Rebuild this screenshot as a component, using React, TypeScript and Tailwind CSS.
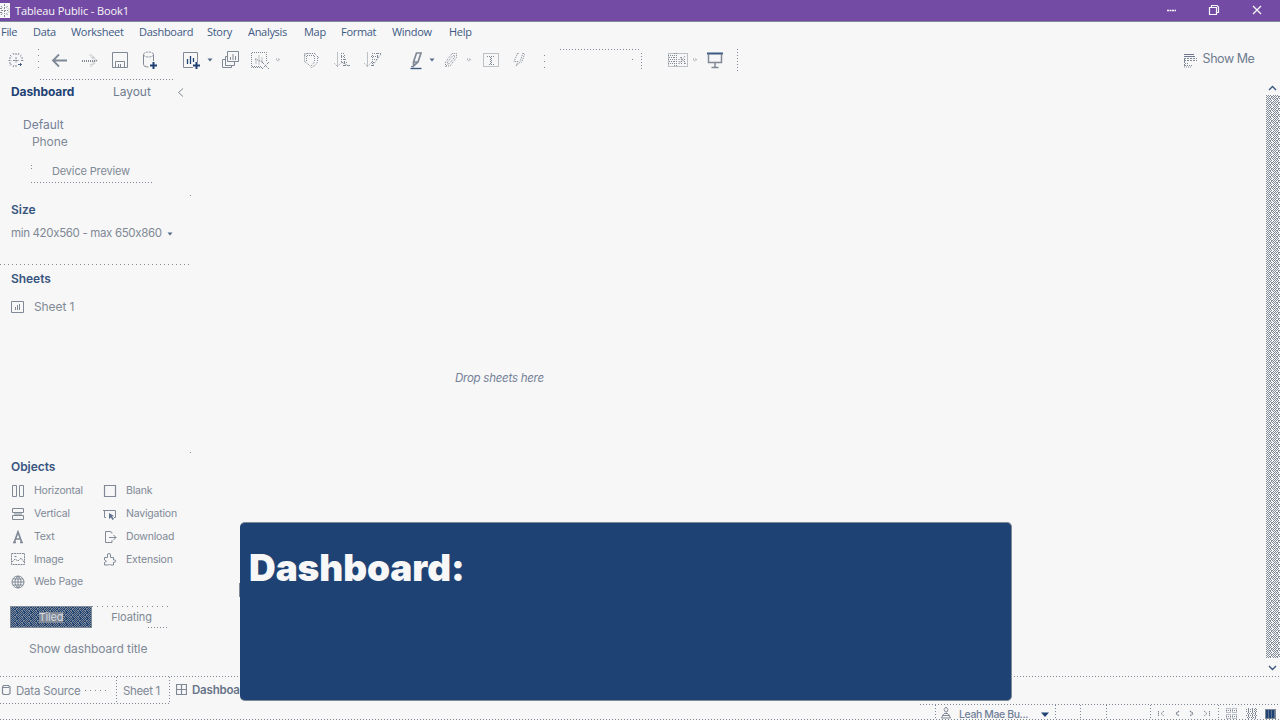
import type { ReactNode } from "react";

const dotsX = "bg-[repeating-linear-gradient(90deg,#808996_0_1px,transparent_1px_3px)]";
const dotsWide = "bg-[repeating-linear-gradient(90deg,#808996_0_1px,transparent_1px_5px)]";
const dotsY = "bg-[repeating-linear-gradient(180deg,#808996_0_1px,transparent_1px_3px)]";
const dotsYWide = "bg-[repeating-linear-gradient(180deg,#808996_0_1px,transparent_1px_6px)]";

function Dither({ id, w, h, color, className = "" }: { id: string; w: number; h: number; color: string; className?: string }) {
  return (
    <svg width={w} height={h} viewBox={`0 0 ${w} ${h}`} shapeRendering="crispEdges" className={`block shrink-0 ${className}`}>
      <defs>
        <pattern id={id} width="7" height="6" patternUnits="userSpaceOnUse">
          <path
            d="M0 0h1v1H0zM2 0h1v1H2zM4 0h1v1H4zM1 1h1v1H1zM3 1h1v1H3zM5 1h2v1H5zM0 2h1v1H0zM2 2h1v1H2zM5 2h1v1H5zM1 3h1v1H1zM3 3h2v1H3zM6 3h1v1H6zM0 4h1v1H0zM2 4h1v1H2zM4 4h1v1H4zM1 5h1v1H1zM3 5h1v1H3zM5 5h1v1H5z"
            fill={color}
          />
        </pattern>
      </defs>
      <path d={`M0 0h${w}v${h}H0z`} fill={`url(#${id})`} />
    </svg>
  );
}

function Icon({ children, className = "", dash = false, w = 20, h = 20 }: { children: ReactNode; className?: string; dash?: boolean; w?: number; h?: number }) {
  return (
    <svg
      width={w}
      height={h}
      viewBox={`0 0 ${w} ${h}`}
      fill="none"
      stroke="#808996"
      strokeWidth="1"
      strokeDasharray={dash ? "1 1" : undefined}
      className={`shrink-0 ${className}`}
    >
      {children}
    </svg>
  );
}

function Caret({ className = "", dark = false }: { className?: string; dark?: boolean }) {
  return (
    <svg width="6" height="4" viewBox="0 0 6 4" className={`shrink-0 ${className}`}>
      {dark ? <path d="M.5 .5h5L3 3.5z" fill="#52698a" /> : <path d="M1 1h4L3 3.5z" fill="none" stroke="#808996" strokeWidth=".8" strokeDasharray="1 1" />}
    </svg>
  );
}

const menu = [
  ["File", "w-8"],
  ["Data", "w-[38px]"],
  ["Worksheet", "w-[68px]"],
  ["Dashboard", "w-[68px]"],
  ["Story", "w-[41px]"],
  ["Analysis", "w-14"],
  ["Map", "w-[37px]"],
  ["Format", "w-[51px]"],
  ["Window", "w-[57px]"],
  ["Help", "w-10"],
];

function TitleBar() {
  return (
    <header className="flex h-[22px] shrink-0 items-center border-b border-[#808996] bg-[#734ba4] text-[#f7f7f7]">
      <svg width="10" height="15" viewBox="0 0 10 15" className="shrink-0">
        <path d="M0 0h10v15H0z" fill="#f7f7f7" />
        <path d="M4.500 4v7M1 7.500h7M1 3l1.500 2M7.500 3 6 5M1 12l1.500-2M7.500 12 6 10M4.500 1v2M4.500 12v2M8 5.500l1 1M8 9.500l1-1M0 5.500h2M0 9.500h2" stroke="#808996" strokeDasharray="2 1" fill="none" />
      </svg>
      <span className="ml-[5px] w-[200px] text-[11px] leading-5 font-medium tracking-[-0.1px]">Tableau Public - Book1</span>
      <div className="ml-auto flex items-center pb-0.5">
        <svg width="10" height="10" viewBox="0 0 10 10" stroke="#f7f7f7" fill="none" className="mr-[-2px] ml-0.5"><path d="M0 5.500h9" strokeWidth="1.300" strokeDasharray="2 .5" /></svg>
        <svg width="12" height="12" viewBox="0 0 12 12" stroke="#f7f7f7" fill="none" className="ml-[33px]"><path d="M1.500 3.500h7v7h-7zM3.500 3V1.500h5.500l1.500 1.500v5.500H9" strokeWidth="1.200" /></svg>
        <svg width="10" height="10" viewBox="0 0 10 10" stroke="#f7f7f7" fill="none" className="mr-[18px] ml-[32px]"><path d="m1 1 8 8M9 1 1 9" strokeWidth="1.300" /></svg>
      </div>
    </header>
  );
}

function Toolbar() {
  return (
    <div className="flex h-9 shrink-0 items-center">
      <Icon className="ml-1.5">
        <path d="M10 3v2M10 7v6M10 15v2M2.500 10.500h3M7 10.500h6M15 10.500h3M4 5l2 2M15.500 5l-2 2M4 15.500l2-2M7 3l1 2M13 3l-1 2M3 8h2M15 8h2M7 17l1-2M3 13h2" strokeDasharray="2 .7" />
        <path d="M12 14.500h4M14.500 13v3" stroke="#4a6388" />
      </Icon>
      <span className={`ml-3 h-[23px] w-px ${dotsYWide}`} />
      <Icon className="ml-[11px]"><path d="M17 10.500H3M9 4.500l-6 6 6 6" strokeWidth="1.800" /></Icon>
      <Icon className="ml-2.5" dash><path d="M2 10.500h15M2 11.500h14M11 4.500l6 6-6 6M10 5.500l5 5-5 5" /></Icon>
      <Icon className="ml-2.5"><path d="M2.500 2.500h15v15h-15zM5.500 17v-5.500h9V17M8.500 14v3M10.500 14v3" /></Icon>
      <Icon className="ml-2.5">
        <ellipse cx="8.500" cy="4.500" rx="5" ry="2.500" strokeDasharray="2 1" />
        <path d="M3.500 4.500v10c0 1.500 2 2.500 5 2.500M13.500 4.500V11" />
        <path d="M13.500 12v7M10 15.500h7" stroke="#1e4274" strokeWidth="2" />
      </Icon>
      <Icon className="ml-[21px]">
        <path d="M12 17.500H2.500v-15h14V12" />
        <path d="M6.500 9v5M9.500 6v8M12.500 8v4" stroke="#1e4274" strokeWidth="1.300" />
        <path d="M15.500 12v7M12 15.500h7" stroke="#1e4274" strokeWidth="2" />
      </Icon>
      <Caret className="ml-1.5" dark />
      <Icon className="ml-[7px]">
        <path d="M7.500 1.500h11v10h-11zM7 6.500H5.500v9h9V12M5 9.500H2.500v8h9V16" />
        <path d="M10.500 7v3M13 4v6M15.500 6v4" />
      </Icon>
      <Icon className="ml-[11px]" dash>
        <path d="M11 17.500H.5v-15h15V11M1 16.500h9M5 8.500v6M8 5.500v9M11 7.500v5M4 9l8 3" />
        <path d="m11 12 7 7M18 12l-7 7" strokeDasharray="3 1" />
      </Icon>
      <Caret className="ml-1" />
      <Icon className="ml-5" dash>
        <path d="M3.500 11.500v-8h5M9 3.500h6M16.500 6v6L14 15.500l-3.500 2L7 14l-3.500-2.500M5.500 11V5.500h8V12L10 16M3 6l4-3M13 3l5 5" />
      </Icon>
      <Icon className="ml-[11px]" dash>
        <path d="M5.500 2.500v14M2.500 13.500l3 3 3-3M9 3.500h3M9 6.500h4M9 9.500h6M10 12.500h6M11 15.500h7M9.500 3v9M12.500 5v11M9 12l8 4" />
      </Icon>
      <Icon className="ml-[11px]" dash>
        <path d="M4.500 2.500v14M1.500 13.500l3 3 3-3M9 3.500h9M8 6.500h8M9 9.500h5M8 12.500h4M8 15.500h3M9.500 3v13M14.500 3v6M18 4l-8 11" />
      </Icon>
      <Icon className="ml-[23px]">
        <path d="M7.500 12 10.500 3h4.500l-3 9-4.500 4zM7.500 12h4" strokeWidth="1.700" />
        <path d="M5 16.500h3" />
        <path d="M4.500 18.500h11" stroke="#3e5a82" strokeWidth="1.400" />
      </Icon>
      <Caret className="ml-[3px]" dark />
      <Icon className="ml-1.5" dash>
        <path d="m4 13 7-9.500h4.500v4L9 16H5zM6 13l6-7.500h1.500v2L8 14zM4 17l3-3" />
      </Icon>
      <Caret className="ml-[5px]" />
      <Icon className="ml-[9px]" dash><path d="M2.500 3.500h15v13h-15zM6 6.500h8M10.500 6v8M8 14.500h5M9.500 7v7" /></Icon>
      <Icon className="ml-2" dash><path d="M8.500 3.500 5 11.500h4l-2 5M8.500 3.500h2M14 3l-3.500 10-4 3M14 3l1.500 1.500-3 8" /></Icon>
      <div className="-mt-0.5 ml-[15px] flex h-5 w-[98px] flex-col">
        <span className={`ml-[16px] h-px w-[79px] shrink-0 ${dotsX}`} />
        <div className="flex h-[19px] items-center justify-between">
          <span className={`mt-2 h-[17px] w-px ${dotsYWide}`} />
          <span className="mr-2 ml-auto h-px w-px bg-[#808996]" />
          <span className={`mt-1 h-[17px] w-px ${dotsY}`} />
        </div>
      </div>
      <Icon className="ml-[25px]" w={22} dash>
        <path d="M1.500 3.500h19v13h-19zM1 5.500h6M2 7.500h6M1 9.500h6M2 11.500h6M1 13.500h6M9.500 3v13M7.500 3v13M12 14V9M14.500 14V6M17.500 14V8M13 7l6 7M18 6l-6 8" />
      </Icon>
      <Caret className="ml-[3px]" />
      <Icon className="ml-[7px]">
        <path d="M2 3.500h16" stroke="#3e5a82" strokeWidth="2" />
        <path d="M3.500 4v8.500h13V4M10 12.500v5M6.500 17.500h7" strokeWidth="1.500" />
      </Icon>
      <span className={`ml-3 h-[22px] w-px ${dotsY}`} />
      <button className="ml-auto flex items-center font-[Inter,sans-serif] text-[12.5px] leading-5 text-[#6f7c90]">
        <Icon w={13} h={15}>
          <path d="M0 1.500h10M0 3.500h11" stroke="#6b7890" />
          <path d="M0 5.500h13M0 7.500h13M.5 5v9" strokeDasharray="2 1" />
          <path d="M1 10.500h4M1 12.500h7M0 14h7" strokeDasharray="1 1" />
        </Icon>
        <span className="-mt-0.5 mr-[25px] ml-[5px] w-[53px] whitespace-nowrap tracking-[-0.45px]">Show Me</span>
      </button>
    </div>
  );
}

const objectsLeft = [
  { label: "Horizontal", icon: <path d="M1.500 1.500h4v11h-4zM8.500 1.500h4v11h-4z" /> },
  { label: "Vertical", icon: <path d="M1.500 1.500h11v4h-11zM1.500 8.500h11v4h-11zM3 7h8" /> },
  { label: "Text", icon: <path d="M3 13 7 2l4 11M4.500 9h5M2 12.500h3M9 12.500h3" strokeWidth="1.700" /> },
  { label: "Image", icon: <path d="M.5 1.500h13v11H.5zM1 10l3-3 3 2 3-3 3 4M3.500 4.500h2" strokeDasharray="2 .6" /> },
  { label: "Web Page", icon: <path d="M7 1a6 6 0 1 0 0 12A6 6 0 1 0 7 1zM7 1v12M1 7h12M2 4h10M2 10h10M7 1C3 4 3 10 7 13M7 1c4 3 4 9 0 12" /> },
];
const objectsRight = [
  { label: "Blank", icon: <path d="M1.500 1.500h11v11h-11z" strokeWidth="1.200" /> },
  { label: "Navigation", icon: <><path d="M3 10.500H1.500v-7h11v7H11M0 3.500h2" /><path d="m6 6 5 3-2 .5 2 2.500-1.500 1L8 10.500 6 12z" fill="#60738f" stroke="none" /></> },
  { label: "Download", icon: <path d="M9 3.500v-1l-2-1H2.500v11H9V10M6 7.500h7M10.500 5l2.500 2.500L10.500 10" /> },
  { label: "Extension", icon: <path d="M1.500 5.500h3V3a1.500 1.500 0 0 1 3 0v2.500h3V8h1.500a1.200 1.200 0 0 1 0 2.200h-1.500v2.800h-3l-1-1-1 1h-4v-2.500l2-1.200-2-1.300z" /> },
];

function ObjectList({ items, className }: { items: { label: string; icon: ReactNode }[]; className: string }) {
  return (
    <ul className={`flex flex-col ${className}`}>
      {items.map((o) => (
        <li key={o.label} className="flex h-[22.7px] items-center text-[10.5px] tracking-[-0.2px]">
          <Icon w={14} h={14}>{o.icon}</Icon>
          <span className="ml-[9px] whitespace-nowrap">{o.label}</span>
        </li>
      ))}
    </ul>
  );
}

function Sidebar() {
  return (
    <aside className="flex w-[191px] shrink-0 flex-col text-[#808996]">
      <span className={`ml-10 h-px w-[134px] shrink-0 ${dotsX}`} />
      <div className="flex h-6 shrink-0 items-center">
        <span className="ml-[11px] w-[102px] text-[12px] font-bold tracking-[-0.1px] text-[#1e4274]">Dashboard</span>
        <span className="w-[64px] text-[12px] tracking-[-0.05px] text-[#6f7c90]">Layout</span>
        <svg width="7" height="9" viewBox="0 0 7 9" fill="none" stroke="#808996"><path d="M6 .5 1.500 4.500 6 8.500" /></svg>
      </div>
      <div className="mt-3 h-[17px] pl-[23px] text-[12px] leading-[17px] text-[#748197]">Default</div>
      <div className="h-[17px] pl-8 text-[12px] leading-[17px] tracking-[-0.1px]">Phone</div>
      <div className="mt-[11px] ml-[31px] flex h-[22px] w-[122px] shrink-0 flex-col">
        <div className="flex h-[21px] items-center">
          <span className="mt-1 h-1 w-px self-start bg-[repeating-linear-gradient(180deg,#808996_0_1px,transparent_1px_3px)]" />
          <span className="ml-[20px] text-[11px] whitespace-nowrap tracking-[-0.15px]">Device Preview</span>
        </div>
        <span className={`h-px ${dotsX}`} />
      </div>
      <div className="flex h-[13px] shrink-0 items-end justify-end"><span className="h-px w-px bg-[#808996]" /></div>
      <h2 className="mt-1 h-5 shrink-0 pl-[11px] text-[12px] leading-5 font-semibold text-[#37557f]">Size</h2>
      <div className="mt-[5px] flex h-[18px] shrink-0 items-center pl-[11px] text-[11.5px]">
        <span className="w-[156px] whitespace-nowrap tracking-[-0.34px]">min 420x560 - max 650x860</span>
        <Caret dark />
      </div>
      <span className={`mt-[21px] h-px shrink-0 bg-[repeating-linear-gradient(90deg,#808996_0_1px,transparent_1px_4px)]`} />
      <h2 className="mt-1 h-5 shrink-0 pl-[11px] text-[12px] leading-5 font-semibold tracking-[-0.05px] text-[#37557f]">Sheets</h2>
      <div className="mt-[9px] flex h-[18px] shrink-0 items-center pl-[11px] text-[12px]">
        <Icon w={13} h={12}><path d="M.5 .5h12v11H.5zM4.500 6v3M6.500 4v5M8.500 3v6" /></Icon>
        <span className="ml-[10px] whitespace-nowrap tracking-[-0.1px]">Sheet 1</span>
      </div>
      <div className="flex h-[137px] shrink-0 items-end justify-end"><span className="h-px w-px bg-[#808996]" /></div>
      <h2 className="mt-1 h-5 shrink-0 pl-[11px] text-[12px] leading-5 font-semibold tracking-[-0.05px] text-[#37557f]">Objects</h2>
      <div className="mt-[3px] flex h-[114px] shrink-0">
        <ObjectList items={objectsLeft} className="ml-[11px] w-[92px]" />
        <ObjectList items={objectsRight} className="" />
      </div>
      <div className="mt-3 ml-[10px] flex h-[22px] shrink-0 text-[11px] leading-5">
        <button className="grid w-[82px] place-items-center border border-[#808996] bg-[#1e4274] text-[#d5dae1]">
          <Dither id="tiled-fill" w={80} h={20} color="#808996" className="col-start-1 row-start-1" />
          <span className="col-start-1 row-start-1 bg-[#808996] leading-[11px] tracking-[-0.2px]">Tiled</span>
        </button>
        <button className="flex w-[77px] flex-col">
          <span className={`h-px w-full shrink-0 ${dotsWide}`} />
          <span className="h-5 w-full pl-0.5 text-center tracking-[-0.1px]">Floating</span>
          <span className={`ml-14 h-px w-5 shrink-0 ${dotsX}`} />
        </button>
      </div>
      <div className="mt-3 h-[18px] shrink-0 pl-[29px] text-[12px] leading-[18px] whitespace-nowrap tracking-[-0.06px]">Show dashboard title</div>
    </aside>
  );
}

function ScrollBar() {
  return (
    <div className="flex w-[14px] shrink-0 flex-col items-center">
      <svg width="9" height="6" viewBox="0 0 9 6" fill="none" stroke="#3a5680" strokeWidth="1.400" className="mt-[6px] mr-px shrink-0"><path d="m1 5 3.500-3.500L8 5" /></svg>
      <Dither id="scroll-thumb" w={14} h={563} color="#808996" className="mt-1" />
      <svg width="9" height="6" viewBox="0 0 9 6" fill="none" stroke="#3a5680" strokeWidth="1.400" className="mt-[7px] mr-px shrink-0"><path d="M1 1 4.500 4.500 8 1" /></svg>
    </div>
  );
}

function SheetTabs() {
  return (
    <div className="flex h-7 shrink-0 flex-col font-[Inter,sans-serif] text-[11.5px] text-[#808996]">
      <span className={`h-px shrink-0 ${dotsX}`} />
      <div className="flex h-[26px] items-center">
        <Icon w={11} h={12}><path d="M3.500 1.500h5l1.500 1.500v6.500l-1.500 1h-5l-1-1V3zM3 3.500h6" strokeWidth="1.200" /></Icon>
        <span className="mt-[3px] ml-[5px] w-[66px] whitespace-nowrap tracking-[-0.2px]">Data Source</span>
        <span className={`ml-[3px] h-px w-[25px] ${dotsWide}`} />
        <span className={`ml-[6px] h-[26px] w-px ${dotsY}`} />
        <span className="mt-[3px] w-[52px] pl-[6px] whitespace-nowrap tracking-[-0.35px]">Sheet 1</span>
        <span className={`h-[26px] w-px ${dotsY}`} />
        <Icon w={11} h={11} className="-mt-px ml-[6px]"><path d="M.5 .5h10v10H.5zM5.500 0v11M0 5.500h11" strokeWidth="1.200" /></Icon>
        <span className="mt-px ml-[5px] font-semibold tracking-[-0.2px] text-[#667489]">Dashboard 1</span>
      </div>
      <span className={`h-px w-[169px] shrink-0 ${dotsX}`} />
    </div>
  );
}

function StatusBar() {
  return (
    <div className="flex h-4 shrink-0 flex-col overflow-hidden">
      <span className={`ml-[920px] h-px w-[360px] shrink-0 ${dotsX}`} />
      <div className="flex h-[14px] shrink-0 items-center pl-[935px]">
        <span className={`h-[14px] w-px shrink-0 ${dotsY}`} />
        <Icon w={10} h={13} className="ml-[5px]"><path d="M5 1 3 3.500 4.500 6h1.500L7 3.500zM3 7.500h4M1.500 9.500h7M.5 12h9M2.500 8 .5 12M7.500 8l2 4" /></Icon>
        <span className="mt-[5px] ml-2 w-[82px] font-[Inter,sans-serif] text-[10.5px] leading-[13px] font-medium whitespace-nowrap text-[#71809a] tracking-[-0.4px]">Leah Mae Bu...</span>
        <svg width="8" height="5" viewBox="0 0 8 5" className="mt-[4px]"><path d="M0 .5h8L4 5z" fill="#1e4274" /></svg>
        <span className={`ml-[6px] h-[14px] w-px ${dotsY}`} />
        <span className={`ml-6 h-[14px] w-px ${dotsY}`} />
        <span className={`ml-[25px] h-[14px] w-px ${dotsY}`} />
        <span className={`ml-[43px] h-[14px] w-px ${dotsY}`} />
        <Icon w={7} h={7} className="mt-[3px] ml-[7px]"><path d="M.5 1v5M6 1 3 3.500 6 6" strokeDasharray="1.500 .5" /></Icon>
        <Icon w={7} h={7} className="mt-[3px] ml-[9px]"><path d="M5 1 2 3.500 5 6" strokeWidth="1.300" strokeDasharray="1.500 .5" /></Icon>
        <Icon w={7} h={7} className="mt-[3px] ml-[7px]"><path d="m2 1 3 2.500L2 6" strokeWidth="1.300" strokeDasharray="1.500 .5" /></Icon>
        <Icon w={7} h={7} className="mt-[3px] ml-[8px]"><path d="m1 1 3 2.500L1 6M6.500 1v5" strokeDasharray="1.500 .5" /></Icon>
        <span className={`ml-[8px] h-[14px] w-px ${dotsY}`} />
        <Icon w={11} h={11} className="mt-[3px] ml-[7px]" dash><path d="M.5 .5h4v4h-4zM6.500 .5h4v4h-4zM.5 6.500h4v4h-4zM6.500 6.500h4v4h-4zM0 2.500h11M0 8.500h11" /></Icon>
        <Icon w={11} h={11} className="mt-[3px] ml-[9px]" dash><path d="M0 1.500h11M0 3.500h11M1 5.500h10M0 7.500h11M1 9.500h10M2.500 0v11M6.500 0v11M9.500 0v11" /></Icon>
        <span className="mt-[4px] ml-[8px] h-[10px] w-[11px] border border-[#808996] bg-[repeating-linear-gradient(90deg,#1e4274_0_2px,#60738f_2px_3px)]" />
      </div>
      <span className={`h-px shrink-0 ${dotsX}`} />
    </div>
  );
}

export default function App() {
  return (
    <div className="relative flex h-[720px] w-[1280px] flex-col overflow-hidden bg-[#f7f7f7] font-['Open_Sans','Noto_Sans',sans-serif]">
      <TitleBar />
      <nav className="flex h-5 shrink-0 items-center pl-px text-[11px] leading-5 font-medium tracking-[-0.3px] text-[#3e5a84]">
        {menu.map(([label, width]) => (
          <span key={label} className={`shrink-0 whitespace-nowrap ${width}`}>{label}</span>
        ))}
      </nav>
      <div className="flex h-[37px] shrink-0 flex-col"><Toolbar /></div>
      <div className="flex h-[597px] shrink-0 font-[Inter,'Open_Sans',sans-serif]">
        <Sidebar />
        <main className="flex flex-1 flex-col">
          <p className="mt-[289px] ml-[264px] text-[11.5px] leading-5 tracking-[-0.25px] text-[#748197] italic">Drop sheets here</p>
        </main>
        <ScrollBar />
      </div>
      <SheetTabs />
      <StatusBar />
      <section className="absolute top-[522px] left-[240px] h-[179px] w-[772px] rounded-[5px] border-t border-r border-b border-[#808996] bg-[#1e4274] pt-[23px] pl-[9px]">
        <h1 className="font-[Inter,sans-serif] text-[37px] leading-[44px] font-black tracking-[-0.1px] whitespace-nowrap text-[#f7f7f7]">Dashboard:</h1>
      </section>
      <span className="absolute top-[583px] left-[239px] h-[14px] w-px bg-[#808996]" />
    </div>
  );
}
